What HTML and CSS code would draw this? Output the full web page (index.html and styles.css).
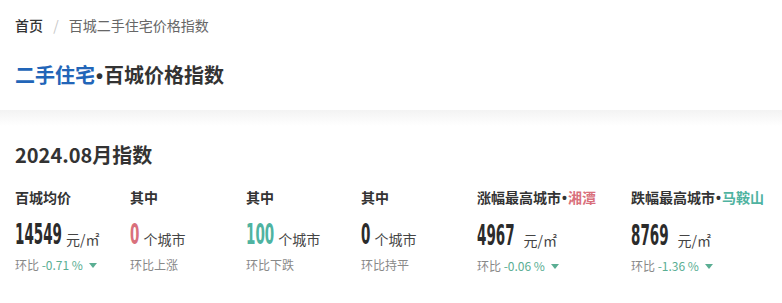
FILE: index.html
```html
<!DOCTYPE html>
<html lang="zh-CN">
<head>
    <meta charset="UTF-8">
    <title>百城价格指数</title>
    <link rel="stylesheet" href="styles.css">
</head>
<body>
    <div class="header">
        <div class="crumbs">
            <a href="#">首页</a>
            <span class="sep">/</span>
            <span class="current">百城二手住宅价格指数</span>
        </div>
        <h1 class="title"><span class="blue">二手住宅</span><span class="dot">•</span>百城价格指数</h1>
    </div>

    <div class="card">
        <h2 class="month">2024.08月指数</h2>
        <div class="stats">
            <div class="stat">
                <div class="label">百城均价</div>
                <div class="value"><span class="num">14549</span><span class="unit">元/㎡</span></div>
                <div class="change">环比 <span class="down">-0.71 % <i class="tri"></i></span></div>
            </div>
            <div class="stat">
                <div class="label">其中</div>
                <div class="value"><span class="num pink">0</span><span class="unit">个城市</span></div>
                <div class="change">环比上涨</div>
            </div>
            <div class="stat">
                <div class="label">其中</div>
                <div class="value"><span class="num teal">100</span><span class="unit">个城市</span></div>
                <div class="change">环比下跌</div>
            </div>
            <div class="stat">
                <div class="label">其中</div>
                <div class="value"><span class="num">0</span><span class="unit">个城市</span></div>
                <div class="change">环比持平</div>
            </div>
            <div class="stat">
                <div class="label">涨幅最高城市<span class="dot">•</span><span class="pink">湘潭</span></div>
                <div class="value"><span class="num">4967</span><span class="unit wide">元/㎡</span></div>
                <div class="change">环比 <span class="down">-0.06 % <i class="tri"></i></span></div>
            </div>
            <div class="stat">
                <div class="label">跌幅最高城市<span class="dot">•</span><span class="teal">马鞍山</span></div>
                <div class="value"><span class="num">8769</span><span class="unit wide">元/㎡</span></div>
                <div class="change">环比 <span class="down">-1.36 % <i class="tri"></i></span></div>
            </div>
        </div>
    </div>
</body>
</html>
```

FILE: styles.css
```css
body {
    margin: 0;
    background-color: #fff;
    font-family: "Noto Sans CJK SC", "Noto Sans", sans-serif;
    color: #333;
}

.header {
    height: 110px;
    padding: 0 15px;
    box-sizing: border-box;
    background-color: #fff;
}

.crumbs {
    padding-top: 15px;
    font-size: 14px;
    line-height: 20px;
}

.crumbs a {
    color: #333;
    font-weight: 500;
    text-decoration: none;
}

.crumbs .sep {
    color: #c8c8c8;
    margin: 0 7px 0 7px;
}

.crumbs .current {
    color: #666;
}

.title {
    margin: 26px 0 0;
    font-size: 20px;
    line-height: 28px;
    font-weight: 700;
    color: #333;
}

.dot {
    font-family: "Liberation Sans", Arial, sans-serif;
    margin: 0 1px;
}

.blue {
    color: #2265b8;
}

.card {
    padding: 31px 15px 0;
    background: linear-gradient(#f3f3f3, #fff 16px);
    height: 193px;
    box-sizing: border-box;
}

.month {
    margin: 0;
    font-size: 20px;
    line-height: 28px;
    font-weight: 700;
    color: #333;
}

.stats {
    display: grid;
    grid-template-columns: 115px 116px 115px 116px 154px 1fr;
    margin-top: 18px;
}

.label {
    font-size: 14px;
    line-height: 20px;
    font-weight: 700;
    color: #333;
    white-space: nowrap;
}

.value {
    display: flex;
    align-items: baseline;
    height: 49px;
    padding-top: 22px;
    box-sizing: border-box;
}

.num {
    display: inline-block;
    font-family: "DejaVu Sans Condensed", "DejaVu Sans", sans-serif;
    font-weight: 700;
    font-size: 15px;
    line-height: 15px;
    color: #2b2b2b;
    transform: scaleY(1.9);
    transform-origin: 0 12.7px;
}

.unit {
    margin-left: 4px;
    font-size: 14px;
    line-height: 20px;
    color: #444;
}

.unit.wide {
    margin-left: 9px;
}

.pink {
    color: #d9707c;
}

.teal {
    color: #4fb3a1;
}

.change {
    font-size: 12px;
    line-height: 18px;
    color: #888;
}

.down {
    color: #5aae93;
}

.tri {
    display: inline-block;
    width: 0;
    height: 0;
    margin-left: 3px;
    border-left: 4px solid transparent;
    border-right: 4px solid transparent;
    border-top: 5px solid #5aae93;
    vertical-align: 2px;
}
```
